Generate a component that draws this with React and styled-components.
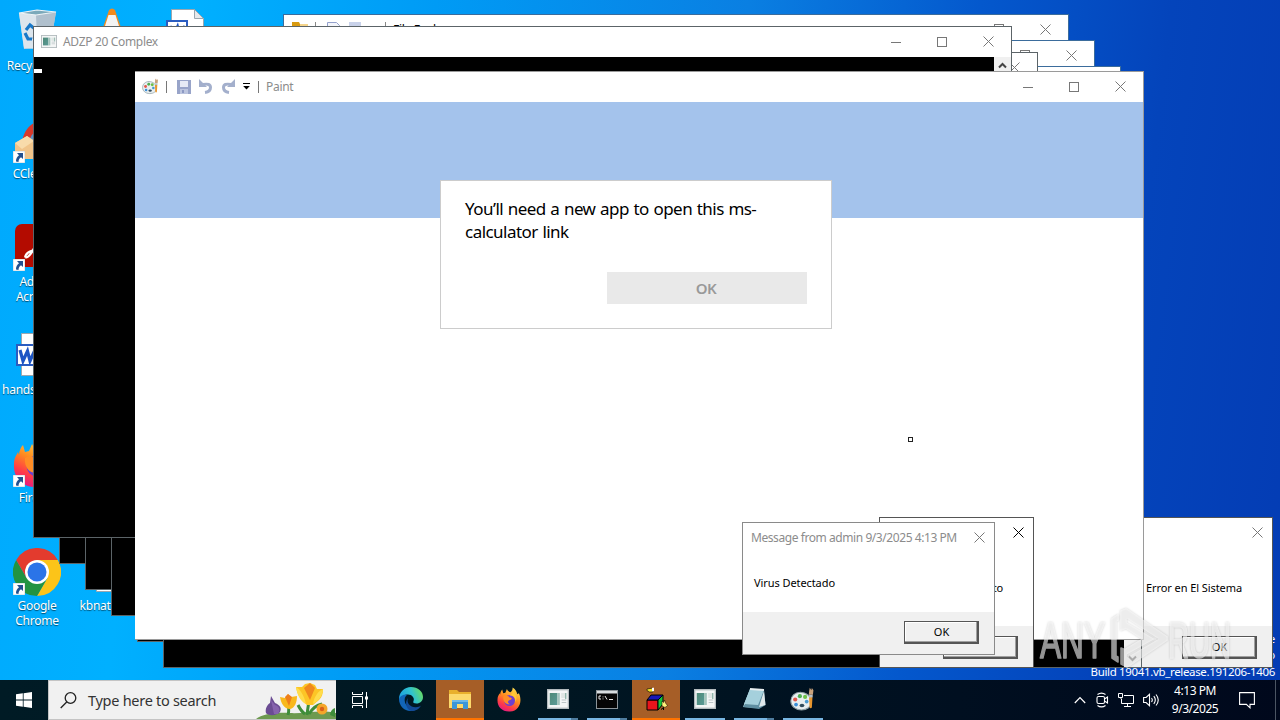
import React from "react";
import styled, { createGlobalStyle, css } from "styled-components";

const GlobalStyle = createGlobalStyle`
  * {
    box-sizing: border-box;
  }

  body {
    margin: 0;
    overflow: hidden;
    font-family: "Noto Sans", "Open Sans", sans-serif;
    font-size: 12px;
    color: #000;
  }

  svg {
    display: block;
    flex: none;
  }
`;

/* ---------- icons ---------- */

const CloseGlyph = ({ size = 11, color = "#777" }) => (
  <svg width={size} height={size} viewBox="0 0 11 11">
    <path d="M.5 .5l10 10M10.5 .5l-10 10" stroke={color} strokeWidth="1" fill="none" />
  </svg>
);

const MaxGlyph = () => (
  <svg width="10" height="10" viewBox="0 0 10 10">
    <rect x=".5" y=".5" width="9" height="9" fill="none" stroke="#777" />
  </svg>
);

const MinGlyph = () => (
  <svg width="10" height="10" viewBox="0 0 10 10">
    <path d="M0 5.5h10" stroke="#777" />
  </svg>
);

const ChevronGlyph = ({ down }) => (
  <svg width="9" height="9" viewBox="0 0 9 9">
    <path d={down ? "M1 2.5l3.5 3.5L8 2.5" : "M1 6.5L4.5 3 8 6.5"} fill="none" stroke="#444" strokeWidth="2" />
  </svg>
);

const AppIcon = ({ width = 16, height = 13 }) => (
  <svg width={width} height={height} viewBox="0 0 24 20" preserveAspectRatio="none">
    <defs>
      <linearGradient id="appPane" x1="0" y1="0" x2="1" y2="1">
        <stop offset="0" stopColor="#4f8a78" />
        <stop offset="1" stopColor="#5a9a96" />
      </linearGradient>
    </defs>
    <rect x=".7" y=".7" width="22.6" height="18.6" fill="#f4f6f6" stroke="#b3bbbe" strokeWidth="1.4" />
    <rect x="3" y="4" width="8" height="12" fill="url(#appPane)" />
    <rect x="11" y="4" width="3" height="12" fill="#a3c4bc" />
    <rect x="15.500" y="4" width="5" height="5" fill="#dfe6e4" />
    <path d="M20.500 4v6" stroke="#7aa79b" strokeWidth="1.200" />
    <path d="M16 11h5M16 13.500h5" stroke="#b9c2c4" />
  </svg>
);

const PaintIcon = ({ size = 17 }) => (
  <svg width={size} height={size} viewBox="0 0 24 24">
    <path d="M10 5C4.500 5 .8 8.800 .8 13.500S5 22 11 22c5.500 0 9.500-3 9.500-7.500C20.500 9 15.500 5 10 5z" fill="#e8eef0" stroke="#8b9da3" strokeWidth="1" />
    <ellipse cx="11.500" cy="17.800" rx="2.300" ry="1.700" fill="#324c5c" />
    <circle cx="5" cy="12" r="2" fill="#e2574c" />
    <circle cx="9.500" cy="8.800" r="2" fill="#4fae51" />
    <circle cx="5.800" cy="16.800" r="1.800" fill="#3a8fd8" />
    <circle cx="14.500" cy="9.500" r="2" fill="#6cc04a" />
    <circle cx="16" cy="14" r="1.800" fill="#4a9bd1" />
    <path d="M18.300 10l1.500-1 1.800 1-.6 9.500c-.3 1.300-2 1.300-2.200 0z" fill="#e8962e" />
    <path d="M18 7.500h4l.5-4.500L21 1l-.5 2L19 .8 18.500 3z" fill="#c9a27c" />
    <path d="M18.300 7.500h3.500V10h-3.500z" fill="#b8bfc4" />
  </svg>
);

const SaveIcon = () => (
  <svg width="14" height="14" viewBox="0 0 14 14">
    <path d="M0 0h14v14H0z" fill="#98a4c9" />
    <path d="M3 1h8v6H3z" fill="#e6eaf5" />
    <path d="M3 9h8v5H3z" fill="#bcc5df" />
    <path d="M5 10h2v3H5z" fill="#8d9ac4" />
  </svg>
);

const UndoIcon = ({ flip }) => (
  <svg width="14" height="15" viewBox="0 0 14 15">
    <g transform={flip ? "translate(14 0) scale(-1 1)" : undefined}>
      <path d="M4 5.500c5-1 7.500 0 7.500 3 0 2.500-1.500 4.500-5.500 5" fill="none" stroke="#a3afcc" strokeWidth="3" />
      <path d="M0 0v8h8z" fill="#a3afcc" />
    </g>
  </svg>
);

const RecycleBin = () => (
  <svg width="48" height="48" viewBox="0 0 48 48">
    <path d="M6 5l37-1-6 35-26 2z" fill="#c6d3de" />
    <path d="M6 5l17 2 2 34-14-1z" fill="#dce5ec" />
    <path d="M23 7l20-3-6 35-12 2z" fill="#b0c0cd" />
    <path d="M6 5L24 2l19 2-20 3z" fill="#7ba9ba" stroke="#eef4f7" strokeWidth="1.200" />
    <g fill="none" stroke="#1878c8" strokeWidth="3.200">
      <path d="M13 22l4-5 5 4M12 25l3 6h4M23 24l-2 7" />
    </g>
  </svg>
);

const VlcIcon = () => (
  <svg width="48" height="48" viewBox="0 0 48 48">
    <path d="M21 2q3-3 6 0l13 38H8z" fill="#f28a1c" />
    <path d="M20.500 7h7l3.500 11H17z" fill="#f3f3f3" />
    <path d="M13 27h22l3 8H10z" fill="#f3f3f3" />
  </svg>
);

const WordDoc = () => (
  <svg width="48" height="48" viewBox="0 0 48 48">
    <path d="M8.500 1.500h23l9 9v33h-32z" fill="#fff" stroke="#9aa7b0" />
    <path d="M31.500 1.500v9h9z" fill="#e6e9ec" stroke="#9aa7b0" />
    <path d="M4 13h20v20H4z" fill="#fff" stroke="#2a5cc0" strokeWidth="2" />
    <path d="M7 18l3 11 4.500-10 2.500 10 5-11" fill="none" stroke="#1d55c4" strokeWidth="3.200" />
    <path d="M27 20h10M27 25h10M27 30h10" stroke="#8aa" />
  </svg>
);

const CCleaner = () => (
  <svg width="48" height="48" viewBox="0 0 48 48">
    <path d="M38 2C20 3 10 13 9 28l10-4c1-8 7-12 19-12z" fill="#d9392b" />
    <path d="M24 14h18v18H15c0-7 3-14 9-18z" fill="#5b95c8" />
    <path d="M2 27l12-7 14 9v14H2z" fill="#f0c48a" />
    <path d="M2 27l12-7 7 5-12 8z" fill="#f8dbab" />
  </svg>
);

const Acrobat = () => (
  <svg width="48" height="48" viewBox="0 0 48 48">
    <rect x="2" y="0" width="44" height="43" rx="7" fill="#b30b00" />
    <path d="M12 33c2-6 8-8 24-7M12 33c3 3 11-9 13-21M25 12c1 9 6 15 12 18" fill="none" stroke="#fff" strokeWidth="2.200" />
  </svg>
);

const FirefoxIcon = ({ size = 48 }) => (
  <svg width={size} height={size} viewBox="0 0 48 48">
    <defs>
      <linearGradient id="ffBody" x1=".75" y1="0" x2=".25" y2="1">
        <stop offset="0" stopColor="#ffe14d" />
        <stop offset=".45" stopColor="#ff8a1f" />
        <stop offset=".75" stopColor="#ff3b47" />
        <stop offset="1" stopColor="#e0168a" />
      </linearGradient>
    </defs>
    <path d="M10 5l2 7 4-1 3-7c2 4 3 5 7 6 3-2 4-5 4-9 6 4 8 8 9 13l3-2c7 14 2 34-17 35C9 48 0 37 1 24c0-6 2-8 4-12l1 3c0-4 2-8 4-10z" fill="url(#ffBody)" />
    <circle cx="24" cy="26" r="10.500" fill="#6f3fd0" />
    <path d="M12 18c5-3 9-1 12 2 5 0 6 3 1 5-5 1-5 6 0 8-8 1-14-5-13-15z" fill="#ff8d25" />
    <path d="M24 16c9 0 12 6 11 13 5-8 2-17-5-22 1 4-1 7-6 9z" fill="#ffc933" />
  </svg>
);

const ChromeIcon = () => (
  <svg width="48" height="48" viewBox="0 0 48 48">
    <path d="M3.200 12A24 24 0 0 1 44.800 12H24z" fill="#e33b2e" />
    <path d="M24 48a24 24 0 0 0 20.800-36H24l10.400 18z" fill="#fcc419" />
    <path d="M3.200 12A24 24 0 0 0 24 48l10.400-18H13.600z" fill="#229342" />
    <path d="M3.200 12L13.600 30 24 24V12z" fill="#e33b2e" />
    <circle cx="24" cy="24" r="12" fill="#fff" />
    <circle cx="24" cy="24" r="9.500" fill="#2b74e8" />
  </svg>
);

const ShortcutArrow = () => (
  <svg width="12" height="12" viewBox="0 0 12 12">
    <rect width="12" height="12" fill="#fff" stroke="#a9b6c0" strokeWidth=".6" />
    <path d="M4 2h6v6L8 6.200C6 7.500 5.500 9 5.500 11L3 10.500C2.800 8 4 5.800 6 4.200z" fill="#23508f" />
  </svg>
);

const EdgeIcon = () => (
  <svg width="26" height="26" viewBox="0 0 26 26">
    <defs>
      <linearGradient id="edgeTop" x1="0" y1=".6" x2="1" y2=".3">
        <stop offset="0" stopColor="#1a9fe0" />
        <stop offset=".55" stopColor="#30c2cf" />
        <stop offset="1" stopColor="#6bdc5c" />
      </linearGradient>
    </defs>
    <path d="M1 13C1 6 6.500 1 13 1c7 0 12 4.500 12 10 0 4-3 6.500-6.500 6.500-2.500 0-4-.8-3-2.500C17 12 14 8.500 10 8.500 5.500 8.500 2 11 1 15z" fill="url(#edgeTop)" />
    <path d="M1 13c1-3.500 5-5 8.500-4.500C7 10 6 13 7 16.500 8.500 21 14 23.500 20 21.500c-2 2.500-4.500 3.500-7.500 3.500C6 25 1 19.500 1 13z" fill="#1265b8" />
    <path d="M10 12c-2 5 2.500 9.500 8 9.200 2 0 3.800-.7 5-1.700-2 4-6 5.700-10 5.500C8 23 6.500 16 10 12z" fill="#134a96" />
  </svg>
);

const FolderIcon = () => (
  <svg width="24" height="22" viewBox="0 0 24 22">
    <path d="M1 2h8l2 2h12v16H1z" fill="#e9b02c" />
    <path d="M1 6h22v14H1z" fill="#fcd96c" />
    <path d="M4 21v-9h16v9h-5v-5H9v5z" fill="#3c96d8" />
    <path d="M4 12h16v2H4z" fill="#6cb8ea" />
  </svg>
);

const CmdIcon = () => (
  <svg width="22" height="19" viewBox="0 0 22 19">
    <rect x=".5" y=".5" width="21" height="18" fill="#050505" stroke="#8c9499" />
    <path d="M1 1h20v2.500H1z" fill="#d8dde0" />
    <path d="M5 6H3v3h2M7 6.500v.8M7 8.500v.8M9 6l2 3.500M13 9.500h4" stroke="#e8e8e8" fill="none" />
  </svg>
);

const BoxIcon = () => (
  <svg width="24" height="24" viewBox="0 0 24 24">
    <path d="M3 13h11v10H3z" fill="#e8141c" stroke="#000" />
    <path d="M3 13l4-5h12l-5 5z" fill="#1717b8" stroke="#000" />
    <path d="M14 13l5-5v9l-5 6z" fill="#16c43a" stroke="#000" />
    <path d="M3 2l3-.5L9 1v4H5.500L3 3.500z" fill="#f7e32a" stroke="#000" strokeWidth=".6" />
    <path d="M8 .8h2v3.500H8z" fill="#fff" />
    <path d="M18 14l1.500 1.500L20.500 13l1 3 2 2.500-2.500 2-3-1.500z" fill="#fff07a" stroke="#000" strokeWidth=".5" />
    <path d="M17 22.500l2.500-2v2.500" stroke="#000" fill="none" />
  </svg>
);

const NotepadIcon = () => (
  <svg width="24" height="22" viewBox="0 0 24 22">
    <path d="M8 1l14 1-5 18-16-1z" fill="#bfe2e8" />
    <path d="M8 1l14 1-6 15-14-1z" fill="#a5d0dc" />
    <path d="M3 16l13 1 6-15 1.500 15L17 21 1 19z" fill="#5f8fa2" />
    <path d="M17 19l5-16 1.500 14z" fill="#dfe7ea" />
    <path d="M8 1l14 1" stroke="#e8eef0" strokeWidth="1.800" />
  </svg>
);

const StartIcon = () => (
  <svg width="16" height="16" viewBox="0 0 16 16">
    <path d="M0 2.200L6.800 1.300v6.300H0zM7.600 1.200L16 0v7.600H7.600zM0 8.400h6.800v6.300L0 13.800zM7.600 8.400H16V16l-8.400-1.200z" fill="#fff" />
  </svg>
);

const SearchIcon = () => (
  <svg width="17" height="17" viewBox="0 0 17 17">
    <circle cx="10.500" cy="6" r="5.300" fill="none" stroke="#222" strokeWidth="1.300" />
    <path d="M6.700 10L.7 16" stroke="#222" strokeWidth="1.300" />
  </svg>
);

const TaskViewIcon = () => (
  <svg width="17" height="16" viewBox="0 0 17 16">
    <g fill="none" stroke="#fff" strokeWidth="1">
      <path d="M.5 0v2.500h10V0M.5 4.500h10v7H.5zM.5 16v-2.500h10V16M14.500 0v16" />
    </g>
    <path d="M13 4.500h3v3h-3z" fill="#fff" />
  </svg>
);

const Crocuses = () => (
  <svg width="80" height="38" viewBox="0 0 80 38">
    <path d="M0 38c6-5 20-7 34-6s30-4 46 0v6z" fill="#6d9a4f" />
    <path d="M32 34c2-8 0-10-1-12M51 34c1-9 2-12 2-16M42 24c2 4 4 7 7 9M66 23c-6 1-10 5-13 10" stroke="#3f8d3a" strokeWidth="3" fill="none" />
    <path d="M15 15l4 7c5 2 7 5 5 9-3 4-12 4-14 1-1-4 1-8 4-10z" fill="#6b4c93" />
    <path d="M15 19l3 14h4c3-4 1-8-3-9z" fill="#8663ad" />
    <path d="M24 16l5 1 3-4 3 3 6-1c0 6-2 12-7 13-6 0-9-6-10-12z" fill="#f8b81c" />
    <path d="M29 16l3-3 4 3-3 9z" fill="#ee7e1b" />
    <path d="M40 6l6 0 3-3 5-1 5 2 2 4 6 0c0 5-1 8-4 11l-6 5h-6c-6-4-10-11-11-18z" fill="#fcc526" />
    <path d="M48 7l6-5 5 5-5 12z" fill="#f0881d" />
    <path d="M40 6c4 2 8 8 10 17-6-3-9-10-10-17zM67 8c-5 2-9 8-10 15 6-3 10-9 10-15z" fill="#ffdc4a" />
    <circle cx="66" cy="28" r="5.500" fill="#f4a62a" />
    <circle cx="66" cy="28" r="2.200" fill="#d9601a" />
    <path d="M74 34c0-3 2-6 5-7v9z" fill="#3f8d3a" />
  </svg>
);

const TrayChevron = () => (
  <svg width="12" height="8" viewBox="0 0 12 8">
    <path d="M.8 7L6 1.500 11.200 7" fill="none" stroke="#fff" strokeWidth="1.200" />
  </svg>
);

const MeetNow = () => (
  <svg width="14" height="16" viewBox="0 0 14 16">
    <g fill="none" stroke="#fff" strokeWidth="1.100">
      <rect x="2" y="4.500" width="7.500" height="7" rx="1.500" />
      <path d="M9.500 7l3-2v6l-3-2M2.500 2.500Q6.500-.3 10.500 2.500M2.500 13.500q4 2.800 8 0" />
    </g>
  </svg>
);

const NetworkIcon = () => (
  <svg width="16" height="14" viewBox="0 0 16 14">
    <g fill="none" stroke="#fff">
      <path d="M6 2.500h9.500v8H3.500V5.500M9.500 10.500v3M6 13.500h7M.5 .5h4v4h-4zM2.500 4.500v1" />
    </g>
  </svg>
);

const VolumeIcon = () => (
  <svg width="17" height="14" viewBox="0 0 17 14">
    <g fill="none" stroke="#fff" strokeWidth="1.100">
      <path d="M.6 4.500h2.500L6.500 1.300v11.400L3.100 9.500H.6zM8.500 5q1.600 2 0 4M10.800 3.200q3 3.800 0 7.600M13 1.500q4.500 5.500 0 11" />
    </g>
  </svg>
);

const ActionCenter = () => (
  <svg width="16" height="17" viewBox="0 0 16 17">
    <path d="M.6 .6h14.800v11.800h-4.400v3.400l-3.600-3.400H.6z" fill="none" stroke="#fff" strokeWidth="1.100" />
  </svg>
);

/* ---------- desktop ---------- */

const shortcuts = [
  [
    { label: "Recycle Bin", icon: <RecycleBin /> },
    { label: "CCleaner", icon: <CCleaner />, link: true },
    { label: "Adobe Acrobat", icon: <Acrobat />, link: true },
    { label: "handsome.rtf", icon: <WordDoc /> },
    { label: "Firefox", icon: <FirefoxIcon />, link: true },
    { label: "Google Chrome", icon: <ChromeIcon />, link: true },
  ],
  [
    { label: "VLC", icon: <VlcIcon /> },
    { label: "", icon: null },
    { label: "", icon: null },
    { label: "", icon: null },
    { label: "", icon: null },
    { label: "kbnatura.rtf", icon: <WordDoc /> },
  ],
  [{ label: "", icon: <WordDoc /> }],
];

function Shortcut({ label, icon, link }) {
  return (
    <ShortcutCell>
      <ShortcutArt>
        {icon}
        {link && (
          <ArrowBadge>
            <ShortcutArrow />
          </ArrowBadge>
        )}
      </ShortcutArt>
      <span>{label}</span>
    </ShortcutCell>
  );
}

function CaptionButtons() {
  return (
    <Captions>
      <span>
        <MinGlyph />
      </span>
      <span>
        <MaxGlyph />
      </span>
      <span>
        <CloseGlyph />
      </span>
    </Captions>
  );
}

function ConsoleWindow({ x, y, title, caret }) {
  return (
    <Window $x={x} $y={y} $w={979} $h={512} $edge="#5c6468">
      <TitleBar $height={30}>
        <AppIcon />
        <TitleText $gap={6}>{title}</TitleText>
        <CaptionButtons />
      </TitleBar>
      <ConsoleBody>
        <ConsoleScreen>{caret && <Caret />}</ConsoleScreen>
        <ScrollTrack>
          <ChevronGlyph />
          <ChevronGlyph down />
        </ScrollTrack>
      </ConsoleBody>
    </Window>
  );
}

function ExplorerWindow({ x, y }) {
  return (
    <Window $x={x} $y={y} $w={786} $h={430} $edge="#3b6c9c">
      <TitleBar $height={29}>
        <svg width="95" height="16" viewBox="0 0 95 16">
          <path d="M1 1h7l1 2h8v11H1z" fill="#d99a10" />
          <path d="M9 3h8v11H9z" fill="#f6d58b" />
          <path d="M24.500 1v13M94.500 1v13" stroke="#888" />
          <path d="M36.500 1.500h9l3 3v11h-12z" fill="#f3f5fb" stroke="#93a0cc" />
          <path d="M58 1h12v14H58z" fill="#c9d2ea" />
        </svg>
        <TitleText $gap={7} $color="#000">File Explorer</TitleText>
        <CaptionButtons />
      </TitleBar>
    </Window>
  );
}

function MessageBox({ x, y, w, h, title, text, active, front, indent = 10 }) {
  return (
    <Window $x={x} $y={y} $w={w} $h={h} $edge={front ? "#8a8a8a" : "#555"}>
      <MessageTitle>
        <span>{title}</span>
        <CloseGlyph color={active ? "#000" : "#777"} />
      </MessageTitle>
      <MessageText $indent={indent} $top={front ? 23 : 33}>
        {text}
      </MessageText>
      <MessageFooter $front={front}>
        <PushButton>OK</PushButton>
      </MessageFooter>
    </Window>
  );
}

function PaintWindow() {
  return (
    <Window $x={135} $y={71} $w={1009} $h={569} $edge="#9a9a9a" $bare>
      <TitleBar $height={30}>
        <PaintIcon />
        <Divider $left={7} $right={10} />
        <QuickTools>
          <SaveIcon />
          <UndoIcon />
          <UndoIcon flip />
          <svg width="7" height="7" viewBox="0 0 7 7">
            <path d="M0 .5h7" stroke="#000" />
            <path d="M.2 3h6.600L3.500 6.400z" fill="#000" />
          </svg>
        </QuickTools>
        <Divider $left={8} $right={0} />
        <TitleText $gap={7} $spacing={-0.3}>Paint</TitleText>
        <CaptionButtons />
      </TitleBar>
      <Ribbon />
    </Window>
  );
}

function Watermark() {
  return (
    <Brand>
      <svg width="200" height="68" viewBox="0 0 200 68">
        <g fill="#fff" stroke="#fff" strokeWidth="1.600" strokeLinejoin="round" opacity=".58">
          <g fontFamily="Liberation Sans, sans-serif" fontSize="50">
            <text x="4" y="54" textLength="65" lengthAdjust="spacingAndGlyphs">ANY</text>
            <text x="132" y="54" textLength="63" lengthAdjust="spacingAndGlyphs">RUN</text>
          </g>
          <path d="M82 11l-6 4v39l6 4v-5l-2-1V17l2-1z" />
          <path d="M85 7l5-2 41 28v3L91 63l-6-3V44l5 2v9l34-20L90 13v11l-5 2z" />
          <path d="M90 19l27 16-27 15v-5l17-10-17-11z" />
        </g>
      </svg>
    </Brand>
  );
}

const taskItems = [
  { icon: <EdgeIcon /> },
  { icon: <FolderIcon />, alert: true },
  { icon: <FirefoxIcon size={25} /> },
  { icon: <AppIcon width={22} height={20} />, open: true, stacked: true },
  { icon: <CmdIcon />, open: true, stacked: true },
  { icon: <BoxIcon />, alert: true },
  { icon: <AppIcon width={22} height={20} />, open: true },
  { icon: <NotepadIcon />, open: true, stacked: true },
  { icon: <PaintIcon size={25} />, open: true },
];

export default function App() {
  return (
    <Screen>
      <GlobalStyle />
      <Workspace>
        <ShortcutGrid>
          {shortcuts.map((column, i) => (
            <ShortcutColumn key={i}>
              {column.map((item, j) => (
                <Shortcut key={j} {...item} />
              ))}
            </ShortcutColumn>
          ))}
        </ShortcutGrid>
        <BuildInfo>
          <div>Test Mode</div>
          <div>Windows 10 Pro</div>
          <div>Build 19041.vb_release.191206-1406</div>
        </BuildInfo>

        <ExplorerWindow x={283} y={14} />
        <ExplorerWindow x={309} y={40} />
        <ExplorerWindow x={335} y={66} />
        <MessageBox x={1120} y={517} w={153} h={151} text="Error en El Sistema" indent={25} />
        {[1, 2, 3, 4, 5].map((n) => (
          <ConsoleWindow key={n} x={33 + n * 26} y={26 + n * 26} title="ADZP 20 Complex" />
        ))}
        <ConsoleWindow x={33} y={26} title="ADZP 20 Complex" caret />
        <PaintWindow />
        <AppPrompt>
          <p>You’ll need a new app to open this ms-calculator link</p>
          <PromptButton>OK</PromptButton>
        </AppPrompt>
        <CanvasCursor />
        <MessageBox x={879} y={517} w={155} h={151} text="Virus Detecto" indent={55} active />
        <MessageBox
          x={742}
          y={522}
          w={253}
          h={133}
          title="Message from admin 9/3/2025 4:13 PM"
          text="Virus Detectado"
          indent={11}
          front
        />
        <Watermark />
      </Workspace>

      <Taskbar>
        <StartButton>
          <StartIcon />
        </StartButton>
        <SearchBox>
          <SearchIcon />
          <span>Type here to search</span>
          <Crocuses />
        </SearchBox>
        <TaskViewButton>
          <TaskViewIcon />
        </TaskViewButton>
        <TaskList>
          {taskItems.map((item, i) => (
            <TaskItem key={i} $alert={item.alert}>
              <TaskIcon $nudge={item.open}>{item.icon}</TaskIcon>
              {item.open && <OpenMark $stacked={item.stacked} />}
            </TaskItem>
          ))}
        </TaskList>
        <Tray>
          <TrayChevron />
          <MeetNow />
          <NetworkIcon />
          <VolumeIcon />
        </Tray>
        <Clock>
          <span>4:13 PM</span>
          <span>9/3/2025</span>
        </Clock>
        <ActionSlot>
          <ActionCenter />
        </ActionSlot>
        <PeekEdge />
      </Taskbar>
    </Screen>
  );
}

const Screen = styled.div`
  display: flex;
  flex-direction: column;
  width: 1280px;
  height: 720px;
  overflow: hidden;
`;

const Workspace = styled.main`
  position: relative;
  height: 680px;
  overflow: hidden;
  background: linear-gradient(97deg, #00a9fd 0%, #00b0ff 14%, #009bf5 32%, #0a7fe2 55%, #0458cd 72%, #0444bb 86%, #043cb4 100%);
`;

const ShortcutGrid = styled.div`
  display: flex;
  gap: 1px;
  padding-top: 8px;
`;

const ShortcutColumn = styled.div`
  display: flex;
  flex-direction: column;
  width: 74px;
`;

const ShortcutCell = styled.div`
  display: flex;
  flex-direction: column;
  align-items: center;
  height: 108px;
  color: #fff;
  font-size: 12px;
  line-height: 15px;
  letter-spacing: -0.25px;
  text-align: center;
  text-shadow: 0 1px 1px rgba(0, 0, 0, 0.55);

  span {
    width: 70px;
    margin-top: 2px;
  }
`;

const ShortcutArt = styled.div`
  position: relative;
  width: 48px;
  height: 48px;
`;

const ArrowBadge = styled.div`
  position: absolute;
  left: 0;
  bottom: 1px;
`;

const BuildInfo = styled.div`
  position: absolute;
  right: 5px;
  bottom: 0;
  color: #fff;
  font-size: 11.5px;
  line-height: 16.5px;
  letter-spacing: -0.34px;
  text-align: right;
`;

const Window = styled.section`
  position: absolute;
  left: ${(props) => props.$x}px;
  top: ${(props) => props.$y}px;
  width: ${(props) => props.$w}px;
  height: ${(props) => props.$h}px;
  display: flex;
  flex-direction: column;
  background: #fff;
  border: 1px solid ${(props) => props.$edge};
  ${(props) =>
    props.$bare &&
    css`
      border-left-width: 0;
    `}
`;

const TitleBar = styled.header`
  display: flex;
  flex: none;
  align-items: center;
  height: ${(props) => props.$height}px;
  padding: 0 0 1px 7px;
  background: #fff;
`;

const TitleText = styled.span`
  flex: 1;
  margin-left: ${(props) => props.$gap}px;
  color: ${(props) => props.$color || "#8c8c8c"};
  letter-spacing: ${(props) => props.$spacing ?? -0.33}px;
  white-space: nowrap;
`;

const Captions = styled.div`
  display: flex;
  height: 100%;

  span {
    display: flex;
    align-items: center;
    justify-content: center;
    width: 46px;
  }
`;

const ConsoleBody = styled.div`
  display: flex;
  flex: 1;
  background: #000;
`;

const ConsoleScreen = styled.div`
  flex: 1;
  padding-top: 12px;
`;

const Caret = styled.div`
  width: 8px;
  height: 4px;
  background: #fff;
`;

const ScrollTrack = styled.div`
  display: flex;
  flex-direction: column;
  align-items: center;
  justify-content: space-between;
  width: 17px;
  padding: 4px 0;
  background: #f0f0f0;
`;

const Divider = styled.i`
  width: 1px;
  height: 12px;
  margin: 0 ${(props) => props.$right}px 0 ${(props) => props.$left}px;
  background: #777;
`;

const QuickTools = styled.div`
  display: flex;
  align-items: center;
  gap: 8px;
`;

const Ribbon = styled.div`
  height: 116px;
  background: #a4c3ec;
`;

const AppPrompt = styled.section`
  position: absolute;
  left: 440px;
  top: 180px;
  display: flex;
  flex-direction: column;
  align-items: flex-end;
  width: 392px;
  height: 149px;
  padding: 16px 24px 0;
  background: #fff;
  border: 1px solid #ccc;

  p {
    width: 100%;
    margin: 0 0 29px;
    font-size: 17px;
    line-height: 23px;
    letter-spacing: -0.53px;
    word-spacing: 0.7px;
  }
`;

const PromptButton = styled.button`
  width: 200px;
  height: 32px;
  padding: 0 2px 0 0;
  border: none;
  background: #e9e9e9;
  color: #999;
  font-family: inherit;
  font-size: 15px;
  font-weight: 600;
  letter-spacing: -0.4px;
`;

const CanvasCursor = styled.div`
  position: absolute;
  left: 908px;
  top: 437px;
  width: 5px;
  height: 5px;
  background: #fff;
  border: 1px solid #222;
`;

const MessageTitle = styled.header`
  display: flex;
  flex: none;
  align-items: center;
  justify-content: space-between;
  height: 29px;
  padding: 0 9.5px 0 8px;
  color: #8c8c8c;
  letter-spacing: -0.43px;
  white-space: nowrap;
`;

const MessageText = styled.div`
  flex: 1;
  padding: ${(props) => props.$top}px 0 0 ${(props) => props.$indent}px;
  font-size: 11px;
  line-height: 16px;
  letter-spacing: -0.08px;
  white-space: nowrap;
`;

const MessageFooter = styled.footer`
  display: flex;
  justify-content: flex-end;
  flex: none;
  height: ${(props) => (props.$front ? 42 : 41)}px;
  padding: ${(props) => (props.$front ? 9 : 10)}px 15px 0 0;
  background: #f0f0f0;
`;

const PushButton = styled.button`
  width: 75px;
  height: 23px;
  padding: 0 0 1px 1px;
  border: 1px solid #555;
  border-right-width: 2px;
  border-bottom-width: 2px;
  box-shadow: inset -1px -1px #a0a0a0, inset 1px 1px #fff;
  background: #f0f0f0;
  color: #000;
  font-family: inherit;
  font-size: 11px;
`;

const Brand = styled.div`
  position: absolute;
  left: 1036px;
  top: 604px;
  filter: drop-shadow(0 0 1px rgba(0, 0, 0, 0.3));
`;

const Taskbar = styled.footer`
  display: flex;
  height: 40px;
  background: linear-gradient(90deg, #001b25 0%, #001722 40%, #000f20 75%, #00081c 100%);
  color: #fff;
`;

const StartButton = styled.div`
  display: flex;
  align-items: center;
  justify-content: center;
  width: 48px;
`;

const SearchBox = styled.div`
  display: flex;
  align-items: center;
  width: 288px;
  padding-left: 11px;
  background: #f1f1f1;
  border: 1px solid #c4c4c4;
  border-right: none;
  color: #333;

  span {
    flex: 1;
    margin-left: 11px;
    font-size: 14.5px;
    letter-spacing: -0.28px;
    white-space: nowrap;
  }
`;

const TaskViewButton = styled.div`
  display: flex;
  align-items: center;
  justify-content: center;
  width: 51px;
  padding-right: 2px;
`;

const TaskList = styled.div`
  display: flex;
  flex: 1;
  gap: 1px;
`;

const TaskItem = styled.div`
  display: flex;
  flex-direction: column;
  align-items: center;
  width: 48px;

  ${(props) =>
    props.$alert &&
    css`
      background: #a65e27;
      border-bottom: 2px solid #ff7300;
    `}
`;

const TaskIcon = styled.div`
  display: flex;
  align-items: center;
  height: 38px;
  padding-right: ${(props) => (props.$nudge ? 1 : 0)}px;
`;

const OpenMark = styled.div`
  width: 40px;
  height: 2px;
  background: #78b6e2;
  ${(props) =>
    props.$stacked &&
    css`
      border-right: 7px solid #4f7d9f;
    `}
`;

const Tray = styled.div`
  display: flex;
  align-items: center;
  gap: 9px;
  margin-right: 1px;
`;

const Clock = styled.div`
  display: flex;
  flex-direction: column;
  align-items: center;
  width: 68px;
  padding-top: 2px;
  font-size: 12px;
  line-height: 18px;
  letter-spacing: -0.45px;
`;

const ActionSlot = styled.div`
  display: flex;
  align-items: center;
  justify-content: center;
  width: 36px;
`;

const PeekEdge = styled.div`
  width: 5px;
  margin-left: 10px;
  border-left: 1px solid #4b5563;
`;
